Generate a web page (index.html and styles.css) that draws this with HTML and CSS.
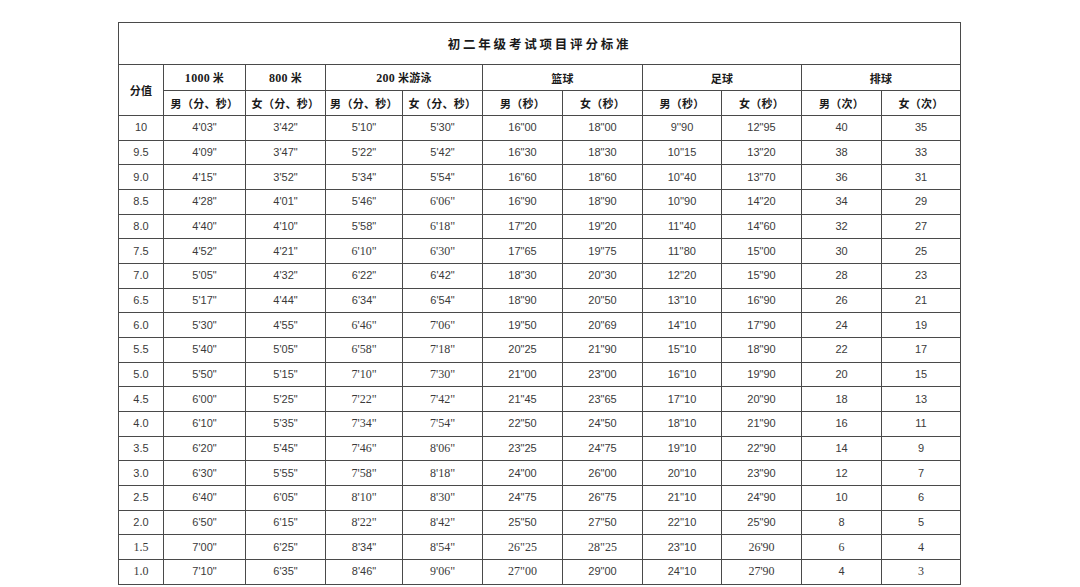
FILE: index.html
```html
<!DOCTYPE html>
<html lang="zh-CN">
<head>
<meta charset="utf-8">
<title>初二年级考试项目评分标准</title>
<link rel="stylesheet" href="styles.css">
</head>
<body>
<div class="page">
<table class="score">
<colgroup>
<col class="c-score"><col class="c82"><col class="c80"><col class="c77"><col class="c80"><col class="c80"><col class="c80"><col class="c79"><col class="c80"><col class="c80"><col class="c79">
</colgroup>
<thead>
<tr class="r-title"><th colspan="11" class="title">初二年级考试项目评分标准</th></tr>
<tr class="r-h1">
<th rowspan="2" class="h">分值</th>
<th class="h"><span class="num">1000</span> 米</th>
<th class="h"><span class="num">800</span> 米</th>
<th colspan="2" class="h"><span class="num">200</span> 米游泳</th>
<th colspan="2" class="h">篮球</th>
<th colspan="2" class="h">足球</th>
<th colspan="2" class="h">排球</th>
</tr>
<tr class="r-h2">
<th class="h">男（分、秒）</th>
<th class="h">女（分、秒）</th>
<th class="h">男（分、秒）</th>
<th class="h">女（分、秒）</th>
<th class="h">男（秒）</th>
<th class="h">女（秒）</th>
<th class="h">男（秒）</th>
<th class="h">女（秒）</th>
<th class="h">男（次）</th>
<th class="h">女（次）</th>
</tr>
</thead>
<tbody>
<tr><td>10</td><td>4'03"</td><td>3'42"</td><td>5'10"</td><td>5'30"</td><td>16"00</td><td>18"00</td><td>9''90</td><td>12"95</td><td>40</td><td>35</td></tr>
<tr><td>9.5</td><td>4'09"</td><td>3'47"</td><td>5'22"</td><td>5'42"</td><td>16"30</td><td>18"30</td><td>10''15</td><td>13"20</td><td>38</td><td>33</td></tr>
<tr><td>9.0</td><td>4'15"</td><td>3'52"</td><td>5'34"</td><td>5'54"</td><td>16"60</td><td>18"60</td><td>10''40</td><td>13"70</td><td>36</td><td>31</td></tr>
<tr><td>8.5</td><td>4'28"</td><td>4'01"</td><td>5'46"</td><td class="s">6'06"</td><td>16"90</td><td>18"90</td><td>10''90</td><td>14"20</td><td>34</td><td>29</td></tr>
<tr><td>8.0</td><td>4'40"</td><td>4'10"</td><td>5'58"</td><td class="s">6'18"</td><td>17"20</td><td>19"20</td><td>11''40</td><td>14"60</td><td>32</td><td>27</td></tr>
<tr><td>7.5</td><td>4'52"</td><td>4'21"</td><td class="s">6'10"</td><td class="s">6'30"</td><td>17"65</td><td>19"75</td><td>11''80</td><td>15"00</td><td>30</td><td>25</td></tr>
<tr><td>7.0</td><td>5'05"</td><td>4'32"</td><td>6'22"</td><td>6'42"</td><td>18"30</td><td>20"30</td><td>12''20</td><td>15"90</td><td>28</td><td>23</td></tr>
<tr><td>6.5</td><td>5'17"</td><td>4'44"</td><td>6'34"</td><td>6'54"</td><td>18"90</td><td>20"50</td><td>13''10</td><td>16"90</td><td>26</td><td>21</td></tr>
<tr><td>6.0</td><td>5'30"</td><td>4'55"</td><td class="s">6'46"</td><td class="s">7'06"</td><td>19"50</td><td>20"69</td><td>14''10</td><td>17"90</td><td>24</td><td>19</td></tr>
<tr><td>5.5</td><td>5'40"</td><td>5'05"</td><td class="s">6'58"</td><td class="s">7'18"</td><td>20"25</td><td>21"90</td><td>15''10</td><td>18"90</td><td>22</td><td>17</td></tr>
<tr><td>5.0</td><td>5'50"</td><td>5'15"</td><td class="s">7'10"</td><td class="s">7'30"</td><td>21"00</td><td>23"00</td><td>16''10</td><td>19"90</td><td>20</td><td>15</td></tr>
<tr><td>4.5</td><td>6'00"</td><td>5'25"</td><td class="s">7'22"</td><td class="s">7'42"</td><td>21"45</td><td>23"65</td><td>17''10</td><td>20"90</td><td>18</td><td>13</td></tr>
<tr><td>4.0</td><td>6'10"</td><td>5'35"</td><td class="s">7'34"</td><td class="s">7'54"</td><td>22"50</td><td>24"50</td><td>18''10</td><td>21"90</td><td>16</td><td>11</td></tr>
<tr><td>3.5</td><td>6'20"</td><td>5'45"</td><td class="s">7'46"</td><td class="s">8'06"</td><td>23"25</td><td>24"75</td><td>19''10</td><td>22"90</td><td>14</td><td>9</td></tr>
<tr><td>3.0</td><td>6'30"</td><td>5'55"</td><td class="s">7'58"</td><td class="s">8'18"</td><td>24"00</td><td>26"00</td><td>20''10</td><td>23"90</td><td>12</td><td>7</td></tr>
<tr><td>2.5</td><td>6'40"</td><td>6'05"</td><td class="s">8'10"</td><td class="s">8'30"</td><td>24"75</td><td>26"75</td><td>21''10</td><td>24"90</td><td>10</td><td>6</td></tr>
<tr><td>2.0</td><td>6'50"</td><td>6'15"</td><td class="s">8'22"</td><td class="s">8'42"</td><td>25"50</td><td>27"50</td><td>22''10</td><td>25"90</td><td>8</td><td>5</td></tr>
<tr><td class="s">1.5</td><td>7'00"</td><td>6'25"</td><td>8'34"</td><td class="s">8'54"</td><td class="s">26"25</td><td class="s">28"25</td><td>23''10</td><td class="s">26'90</td><td class="s">6</td><td class="s">4</td></tr>
<tr><td class="s">1.0</td><td>7'10"</td><td>6'35"</td><td>8'46"</td><td class="s">9'06"</td><td class="s">27"00</td><td>29"00</td><td>24''10</td><td class="s">27'90</td><td>4</td><td class="s">3</td></tr>
</tbody>
</table>
</div>
</body>
</html>
```

FILE: styles.css
```css
html, body {
  margin: 0;
  padding: 0;
  background: #ffffff;
}
.page {
  width: 1080px;
  height: 587px;
  padding: 22px 0 0 118px;
  box-sizing: border-box;
  overflow: hidden;
}
.score {
  border-collapse: collapse;
  table-layout: fixed;
  width: 843px;
  font-family: "Liberation Sans", "Noto Sans CJK SC", sans-serif;
  color: #3a3a3a;
}
.c-score { width: 45px; }
.c82 { width: 82px; }
.c80 { width: 80px; }
.c79 { width: 79px; }
.c77 { width: 77px; }
.score th, .score td {
  border: 1px solid #4a4a4a;
  padding: 0;
  text-align: center;
  vertical-align: middle;
  white-space: nowrap;
  overflow: hidden;
}
.score td {
  font-size: 11px;
  line-height: 13px;
}
.score td.s {
  font-family: "Liberation Serif", serif;
  font-size: 12px;
}
.r-title { height: 42px; }
.r-h1 { height: 26px; }
.r-h2 { height: 25px; }
.score tbody tr { height: 24.68px; }
.title {
  font-family: "Noto Sans CJK SC", sans-serif;
  font-weight: 700;
  font-size: 12.5px;
  letter-spacing: 2.8px;
  color: #1a1a1a;
  padding-left: 3px;
}
.h {
  font-family: "Noto Sans CJK SC", sans-serif;
  font-weight: 700;
  font-size: 11px;
  color: #1a1a1a;
  letter-spacing: 0.3px;
}
.num {
  font-family: "Liberation Serif", serif;
  font-size: 12px;
}
```
